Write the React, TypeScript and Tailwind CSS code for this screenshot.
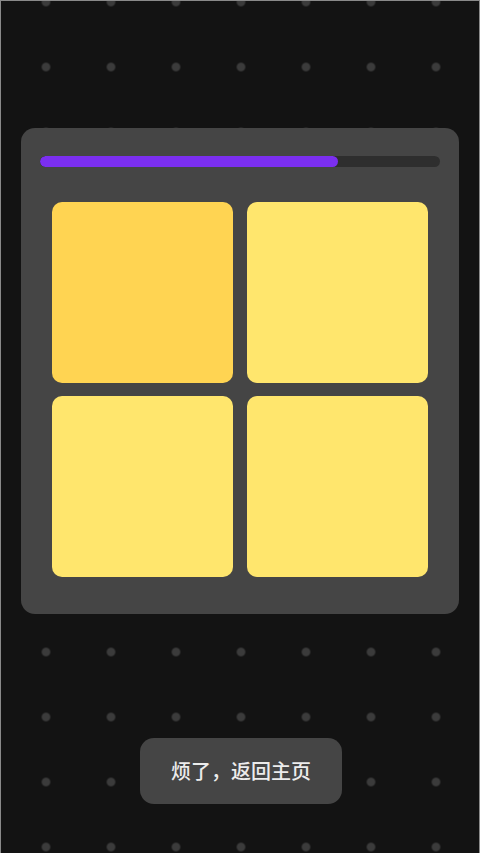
import React from "react";

export default function App() {
  const progress = 74.5;
  return (
    <div
      className="relative h-[853px] w-[480px] overflow-hidden border-x border-t border-[#8a8a8a] bg-[#131313] bg-[radial-gradient(circle,#3b3b3b_0,#3b3b3b_3.8px,transparent_4.8px)] bg-[size:65px_65px] bg-[position:12.5px_-31.5px] font-['Noto_Sans_CJK_SC',sans-serif]"
    >
      <div className="flex flex-col items-center">
        <div className="ml-[20px] mt-[127px] w-[438px] self-start rounded-[14px] bg-[#454545] px-[19px] pb-[37px] pt-[28px]">
          <div className="h-[11px] w-full overflow-hidden rounded-full bg-[#2e2e2e]">
            <div
              className="h-full rounded-full bg-[#7b2ff0]"
              style={{ width: `${progress}%` }}
            />
          </div>
          <div className="mx-[12px] mt-[35px] grid grid-cols-2 gap-x-[14px] gap-y-[13px]">
            <div className="h-[181px] rounded-[10px] bg-[#ffd452]" />
            <div className="h-[181px] rounded-[10px] bg-[#ffe66d]" />
            <div className="h-[181px] rounded-[10px] bg-[#ffe66d]" />
            <div className="h-[181px] rounded-[10px] bg-[#ffe66d]" />
          </div>
        </div>
        <button className="ml-[2px] mt-[124px] flex h-[66px] w-[202px] items-center justify-center rounded-[14px] bg-[#454545] text-[20px] font-medium leading-none text-[#ececec]">
          烦了，返回主页
        </button>
      </div>
    </div>
  );
}
